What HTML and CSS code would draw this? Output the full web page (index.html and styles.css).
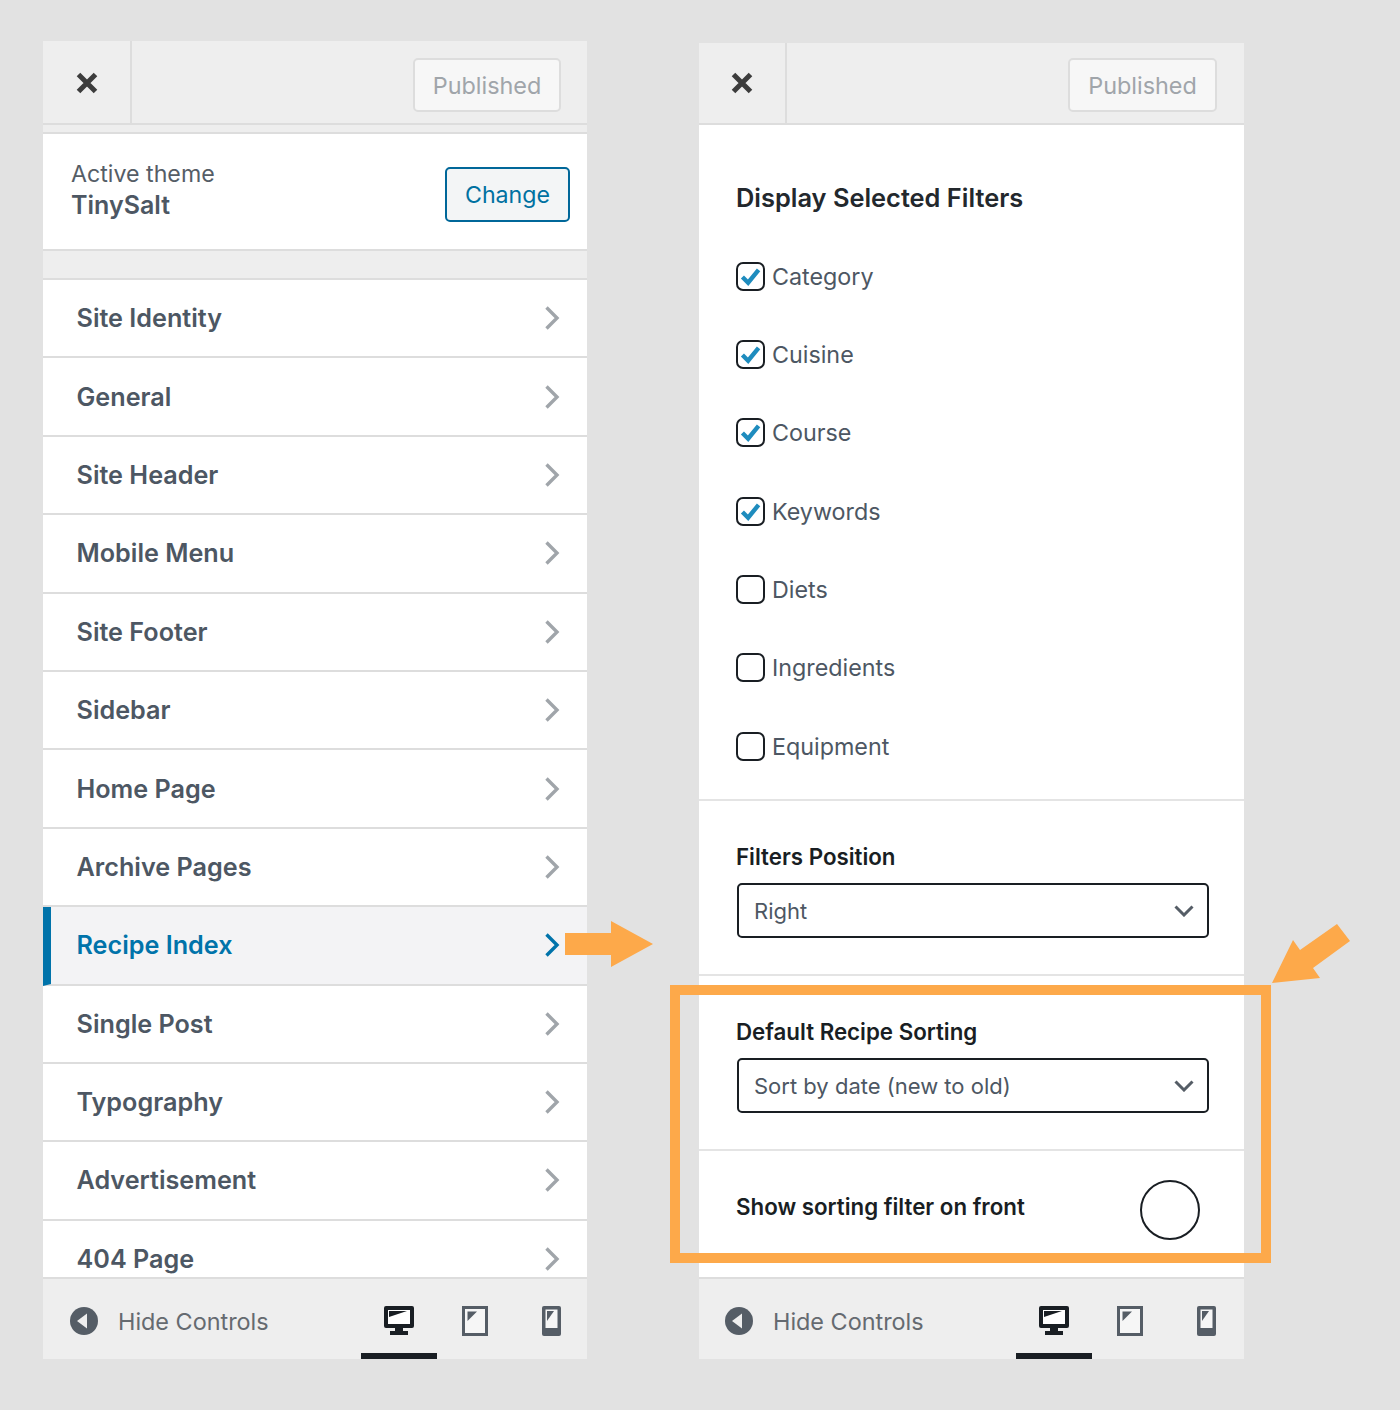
FILE: index.html
```html
<!DOCTYPE html>
<html lang="en">
<head>
  <meta charset="UTF-8">
  <title>Customizer Recipe Index</title>
  <link rel="stylesheet" href="styles.css">
</head>
<body>
  <svg class="sprite" width="0" height="0">
    <symbol id="i-close" viewBox="0 0 24 24"><path d="M3.500 3.500 20.500 20.500M20.500 3.500 3.500 20.500" fill="none" stroke="currentColor" stroke-width="5"/></symbol>
    <symbol id="i-chev" viewBox="0 0 16 26"><path d="M2.500 2.500 13 13 2.500 23.500" fill="none" stroke="currentColor" stroke-width="3.400"/></symbol>
    <symbol id="i-down" viewBox="0 0 20 12"><path d="M1.500 1.500 10 10 18.500 1.500" fill="none" stroke="currentColor" stroke-width="3"/></symbol>
    <symbol id="i-check" viewBox="0 0 22 20"><path d="M2.500 10.500 8.500 16.500 19.500 3" fill="none" stroke="currentColor" stroke-width="4.600"/></symbol>
    <symbol id="i-hide" viewBox="0 0 28 28"><circle cx="14" cy="14" r="14" fill="#555d66"/><path d="M7 14 17 6.500V21.500Z" fill="#eee"/></symbol>
    <symbol id="i-desktop" viewBox="0 0 30 30"><path d="M2 0H28a2 2 0 0 1 2 2V20a2 2 0 0 1-2 2H19V25H24V29H6V25H11V22H2a2 2 0 0 1-2-2V2A2 2 0 0 1 2 0Z" fill="currentColor"/><path d="M4 4H26V18H4Z" fill="#fff"/><path d="M5 5H23L5 11Z" fill="currentColor"/></symbol>
    <symbol id="i-tablet" viewBox="0 0 26 30"><path d="M1.500 1.500H24.500V28.500H1.500Z" fill="#f6f6f6" stroke="currentColor" stroke-width="3"/><path d="M5.500 5.500H15L5.500 15Z" fill="currentColor"/></symbol>
    <symbol id="i-phone" viewBox="0 0 19 30"><rect width="19" height="30" rx="2" fill="currentColor"/><path d="M3.500 3.500H15.500V22H3.500Z" fill="#f6f6f6"/><path d="M5 5H12L5 15Z" fill="currentColor"/></symbol>
  </svg>

  <div class="stage">
    <!-- left panel: customizer menu -->
    <section class="panel panel-left">
      <header class="panel-head">
        <div class="close-box"><svg class="close-icon"><use href="#i-close"/></svg></div>
        <button class="publish">Published</button>
      </header>
      <div class="theme-row">
        <div class="theme-info">
          <div class="theme-label">Active theme</div>
          <div class="theme-name">TinySalt</div>
        </div>
        <button class="change">Change</button>
      </div>
      <ul class="menu">
        <li class="menu-item"><span>Site Identity</span><svg class="chev"><use href="#i-chev"/></svg></li>
        <li class="menu-item"><span>General</span><svg class="chev"><use href="#i-chev"/></svg></li>
        <li class="menu-item"><span>Site Header</span><svg class="chev"><use href="#i-chev"/></svg></li>
        <li class="menu-item"><span>Mobile Menu</span><svg class="chev"><use href="#i-chev"/></svg></li>
        <li class="menu-item"><span>Site Footer</span><svg class="chev"><use href="#i-chev"/></svg></li>
        <li class="menu-item"><span>Sidebar</span><svg class="chev"><use href="#i-chev"/></svg></li>
        <li class="menu-item"><span>Home Page</span><svg class="chev"><use href="#i-chev"/></svg></li>
        <li class="menu-item"><span>Archive Pages</span><svg class="chev"><use href="#i-chev"/></svg></li>
        <li class="menu-item active"><span>Recipe Index</span><svg class="chev"><use href="#i-chev"/></svg></li>
        <li class="menu-item"><span>Single Post</span><svg class="chev"><use href="#i-chev"/></svg></li>
        <li class="menu-item"><span>Typography</span><svg class="chev"><use href="#i-chev"/></svg></li>
        <li class="menu-item"><span>Advertisement</span><svg class="chev"><use href="#i-chev"/></svg></li>
        <li class="menu-item"><span>404 Page</span><svg class="chev"><use href="#i-chev"/></svg></li>
      </ul>
      <footer class="panel-foot">
        <div class="hide-controls"><svg class="hide-icon"><use href="#i-hide"/></svg><span>Hide Controls</span></div>
        <div class="devices">
          <div class="device current"><svg class="icon-desktop"><use href="#i-desktop"/></svg></div>
          <div class="device"><svg class="icon-tablet"><use href="#i-tablet"/></svg></div>
          <div class="device"><svg class="icon-phone"><use href="#i-phone"/></svg></div>
        </div>
      </footer>
    </section>

    <!-- right panel: recipe index options -->
    <section class="panel panel-right">
      <header class="panel-head">
        <div class="close-box"><svg class="close-icon"><use href="#i-close"/></svg></div>
        <button class="publish">Published</button>
      </header>
      <div class="options">
        <div class="opt-filters">
          <h2 class="filters-title">Display Selected Filters</h2>
          <label class="check-row"><span class="checkbox"><svg class="check"><use href="#i-check"/></svg></span>Category</label>
          <label class="check-row"><span class="checkbox"><svg class="check"><use href="#i-check"/></svg></span>Cuisine</label>
          <label class="check-row"><span class="checkbox"><svg class="check"><use href="#i-check"/></svg></span>Course</label>
          <label class="check-row"><span class="checkbox"><svg class="check"><use href="#i-check"/></svg></span>Keywords</label>
          <label class="check-row"><span class="checkbox"></span>Diets</label>
          <label class="check-row"><span class="checkbox"></span>Ingredients</label>
          <label class="check-row"><span class="checkbox"></span>Equipment</label>
        </div>
        <div class="opt-select">
          <div class="field-label">Filters Position</div>
          <div class="select"><span>Right</span><svg class="down"><use href="#i-down"/></svg></div>
        </div>
        <div class="opt-select">
          <div class="field-label">Default Recipe Sorting</div>
          <div class="select"><span>Sort by date (new to old)</span><svg class="down"><use href="#i-down"/></svg></div>
        </div>
        <div class="opt-toggle">
          <div class="field-label">Show sorting filter on front</div>
          <div class="toggle"></div>
        </div>
      </div>
      <footer class="panel-foot">
        <div class="hide-controls"><svg class="hide-icon"><use href="#i-hide"/></svg><span>Hide Controls</span></div>
        <div class="devices">
          <div class="device current"><svg class="icon-desktop"><use href="#i-desktop"/></svg></div>
          <div class="device"><svg class="icon-tablet"><use href="#i-tablet"/></svg></div>
          <div class="device"><svg class="icon-phone"><use href="#i-phone"/></svg></div>
        </div>
      </footer>
    </section>

    <!-- orange annotations on top -->
    <div class="highlight"></div>
    <svg class="arrow arrow-right" viewBox="0 0 88 46"><path d="M0 12H46V0L88 23 46 46V34H0Z"/></svg>
    <svg class="arrow arrow-down" viewBox="0 0 78 60"><path d="M0 59 21 16 28 26 65 0 78 17 41 44 48 54Z"/></svg>
  </div>
</body>
</html>
```

FILE: styles.css
```css
* {
  box-sizing: border-box;
}

body {
  margin: 0;
  background-color: #e2e2e2;
  font-family: Inter, "Open Sans", sans-serif;
}

.sprite {
  position: absolute;
}

.stage {
  position: relative;
  display: flex;
  align-items: flex-start;
  gap: 112px;
  height: 1410px;
  padding-left: 43px;
}

.panel {
  display: flex;
  flex-direction: column;
  background-color: #eee;
  height: 1318px;
  width: 544px;
  overflow: hidden;
}

.panel-left {
  margin-top: 41px;
}

.panel-right {
  margin-top: 43px;
  height: 1316px;
  width: 545px;
}

/* header */
.panel-head {
  display: flex;
  justify-content: space-between;
  align-items: center;
  flex: none;
  height: 82px;
  padding-right: 27px;
  border-bottom: 2px solid #ddd;
}

.panel-left .panel-head {
  height: 84px;
  padding-right: 26px;
}

.close-box {
  display: flex;
  align-items: center;
  justify-content: center;
  width: 88px;
  height: 100%;
  border-right: 2px solid #ddd;
  color: #3c3c3c;
}

.panel-left .close-box {
  width: 89px;
  padding-top: 2px;
}

.close-icon {
  width: 24px;
  height: 24px;
}

.publish {
  width: 149px;
  height: 54px;
  margin-top: 4px;
  background-color: #f7f7f7;
  border: 2px solid #ddd;
  border-radius: 5px;
  color: #a0a5aa;
  font-family: inherit;
  font-size: 23.4px;
}

.panel-left .publish {
  width: 148px;
  margin-top: 6px;
}

/* active theme */
.theme-row {
  display: flex;
  justify-content: space-between;
  align-items: center;
  flex: none;
  height: 119px;
  margin-top: 7px;
  padding: 0 17px 0 28px;
  background-color: #fff;
  border-top: 2px solid #ddd;
  border-bottom: 2px solid #ddd;
}

.theme-info {
  padding-bottom: 3px;
}

.theme-label {
  color: #555d66;
  font-size: 23.2px;
  line-height: 30px;
}

.theme-name {
  color: #4d5763;
  font-size: 25px;
  font-weight: 600;
  line-height: 32px;
}

.change {
  width: 125px;
  height: 55px;
  margin-top: 5px;
  padding-top: 3px;
  background-color: #f3f5f6;
  border: 2px solid #006799;
  border-radius: 5px;
  color: #0071a1;
  font-family: inherit;
  font-size: 23.2px;
}

/* menu list */
.menu {
  flex: 1;
  min-height: 0;
  margin: 27px 0 0;
  padding: 0;
  overflow: hidden;
  list-style: none;
  background-color: #fff;
  border-top: 2px solid #ddd;
}

.menu-item {
  display: flex;
  justify-content: space-between;
  align-items: center;
  height: 78.4px;
  padding: 0 27px 0 33.5px;
  border-bottom: 2px solid #ddd;
  color: #4d5763;
  font-size: 25.2px;
  font-weight: 600;
}

.menu-item.active {
  padding-left: 25.5px;
  background-color: #f3f3f5;
  border-left: 8px solid #0073aa;
  color: #0073aa;
}

.chev {
  width: 16px;
  height: 26px;
  color: #a0a5aa;
}

.active .chev {
  color: #0073aa;
}

/* footer */
.panel-foot {
  display: flex;
  justify-content: space-between;
  flex: none;
  height: 82px;
  padding-left: 26px;
  border-top: 2px solid #ddd;
}

.panel-left .panel-foot {
  padding-left: 27px;
}

.hide-controls {
  display: flex;
  align-items: center;
  gap: 20px;
  padding-top: 4px;
  color: #656a70;
  font-size: 23.4px;
}

.hide-icon {
  width: 28px;
  height: 28px;
}

.devices {
  display: flex;
}

.panel-left .devices {
  margin-right: -2px;
}

.device {
  display: flex;
  justify-content: center;
  align-items: center;
  width: 76px;
  padding-top: 10px;
  border-bottom: 6px solid transparent;
  color: #555d66;
}

.device.current {
  border-bottom-color: #191e23;
  color: #191e23;
}

.icon-desktop {
  width: 30px;
  height: 30px;
}

.icon-tablet {
  width: 26px;
  height: 30px;
}

.icon-phone {
  width: 19px;
  height: 30px;
}

/* options */
.options {
  flex: 1;
  min-height: 0;
  overflow: hidden;
  background-color: #fff;
  color: #191e23;
}

.opt-filters {
  height: 676px;
  padding: 57px 0 0 37px;
  border-bottom: 2px solid #e4e4e4;
}

.filters-title {
  margin: 0 0 23px;
  color: #23282d;
  font-size: 25.4px;
  font-weight: 600;
  line-height: 32px;
}

.check-row {
  display: flex;
  align-items: center;
  gap: 7px;
  height: 78.33px;
  color: #4d5763;
  font-size: 23.3px;
}

.checkbox {
  display: flex;
  justify-content: center;
  align-items: center;
  width: 29px;
  height: 29px;
  border: 2px solid #191e23;
  border-radius: 7px;
}

.check {
  width: 21px;
  height: 19px;
  color: #1e8cbe;
}

.opt-select {
  height: 175px;
  padding: 42px 35px 0 37px;
  border-bottom: 2px solid #e4e4e4;
}

.field-label {
  font-size: 22.3px;
  font-weight: 600;
  line-height: 28px;
}

.select {
  display: flex;
  justify-content: space-between;
  align-items: center;
  height: 55px;
  margin-top: 12px;
  margin-left: 1px;
  padding: 0 13px 0 15px;
  border: 2px solid #191e23;
  border-radius: 5px;
  color: #4d5763;
  font-size: 22px;
}

.down {
  width: 20px;
  height: 12px;
  color: #555d66;
}

.opt-toggle {
  display: flex;
  justify-content: space-between;
  padding: 29px 44px 0 37px;
}

.opt-toggle .field-label {
  margin-top: 13px;
}

.toggle {
  width: 60px;
  height: 60px;
  border: 2px solid #191e23;
  border-radius: 50%;
}

/* annotations */
.highlight {
  position: absolute;
  left: 670px;
  top: 985px;
  width: 601px;
  height: 278px;
  border: 10px solid #fda94a;
}

.arrow {
  position: absolute;
  fill: #fda94a;
}

.arrow-right {
  left: 565px;
  top: 921px;
  width: 88px;
  height: 46px;
}

.arrow-down {
  left: 1272px;
  top: 924px;
  width: 78px;
  height: 60px;
}
```
